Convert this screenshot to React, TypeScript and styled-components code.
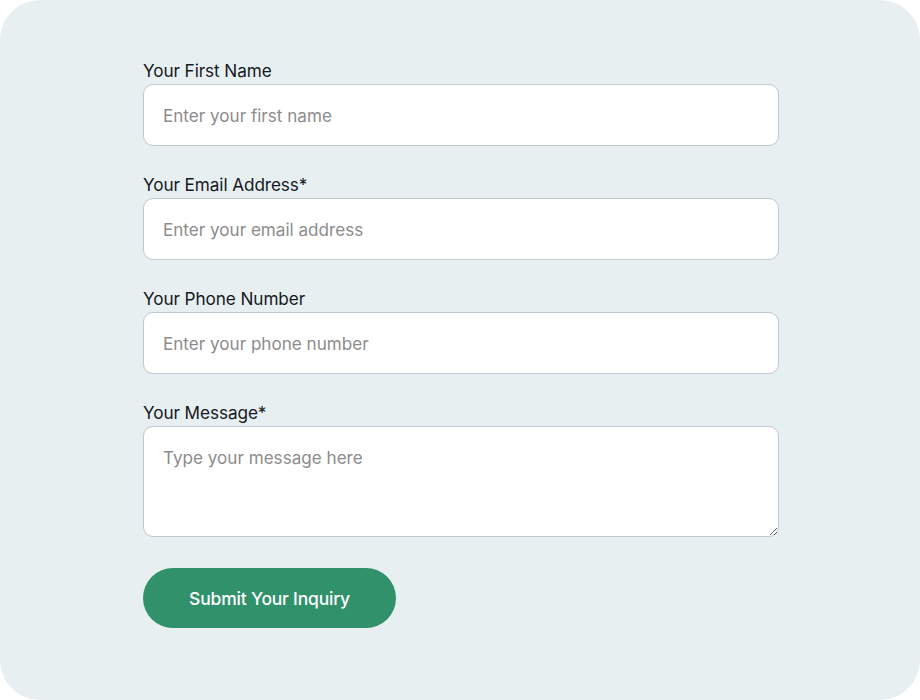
import React, { useState } from "react";
import styled, { createGlobalStyle } from "styled-components";

const GlobalStyle = createGlobalStyle`
  html, body {
    margin: 0;
    padding: 0;
    background: #ffffff;
  }
  * {
    box-sizing: border-box;
  }
`;

const StyledPanel = styled.div`
  width: 920px;
  height: 700px;
  background: #e8eff1;
  border-radius: 40px;
  padding: 59px 0 0 143px;
  font-family: "Inter", "Noto Sans", sans-serif;
`;

const StyledForm = styled.form`
  width: 636px;
  display: flex;
  flex-direction: column;
`;

const StyledField = styled.div`
  display: flex;
  flex-direction: column;
  margin-bottom: 27px;
`;

const StyledLabel = styled.label`
  font-size: 17.2px;
  line-height: 22px;
  padding-top: 1px;
  color: #151a1f;
  margin-bottom: 2px;
  letter-spacing: -0.1px;
`;

const StyledInput = styled.input`
  display: block;
  width: 100%;
  height: 62px;
  background: #ffffff;
  border: 1px solid #bfc7d0;
  border-radius: 10px;
  padding: 0 19px;
  font-family: inherit;
  font-size: 17.1px;
  color: #222;
  outline: none;
  &::placeholder {
    color: #8c8c8c;
  }
`;

const StyledTextarea = styled.textarea`
  display: block;
  width: 100%;
  height: 111px;
  background: #ffffff;
  border: 1px solid #bfc7d0;
  border-radius: 10px;
  padding: 20px 19px;
  font-family: inherit;
  font-size: 17.1px;
  line-height: 22px;
  color: #222;
  outline: none;
  resize: vertical;
  &::placeholder {
    color: #8c8c8c;
  }
`;

const StyledButton = styled.button`
  width: 253px;
  height: 60px;
  margin-top: 4px;
  background: #31916b;
  border: none;
  border-radius: 30px;
  color: #ffffff;
  font-family: inherit;
  font-size: 17.5px;
  font-weight: 500;
  letter-spacing: -0.2px;
  cursor: pointer;
`;

const App = () => {
  const [name, setName] = useState("");
  const [email, setEmail] = useState("");
  const [phone, setPhone] = useState("");
  const [message, setMessage] = useState("");

  return (
    <>
      <GlobalStyle />
      <StyledPanel>
        <StyledForm onSubmit={(e) => e.preventDefault()}>
          <StyledField>
            <StyledLabel>Your First Name</StyledLabel>
            <StyledInput
              type="text"
              placeholder="Enter your first name"
              value={name}
              onChange={(e) => setName(e.target.value)}
            />
          </StyledField>
          <StyledField>
            <StyledLabel>Your Email Address*</StyledLabel>
            <StyledInput
              type="email"
              placeholder="Enter your email address"
              value={email}
              onChange={(e) => setEmail(e.target.value)}
            />
          </StyledField>
          <StyledField>
            <StyledLabel>Your Phone Number</StyledLabel>
            <StyledInput
              type="tel"
              placeholder="Enter your phone number"
              value={phone}
              onChange={(e) => setPhone(e.target.value)}
            />
          </StyledField>
          <StyledField>
            <StyledLabel>Your Message*</StyledLabel>
            <StyledTextarea
              placeholder="Type your message here"
              value={message}
              onChange={(e) => setMessage(e.target.value)}
            />
          </StyledField>
          <StyledButton type="submit">Submit Your Inquiry</StyledButton>
        </StyledForm>
      </StyledPanel>
    </>
  );
};

export default App;
